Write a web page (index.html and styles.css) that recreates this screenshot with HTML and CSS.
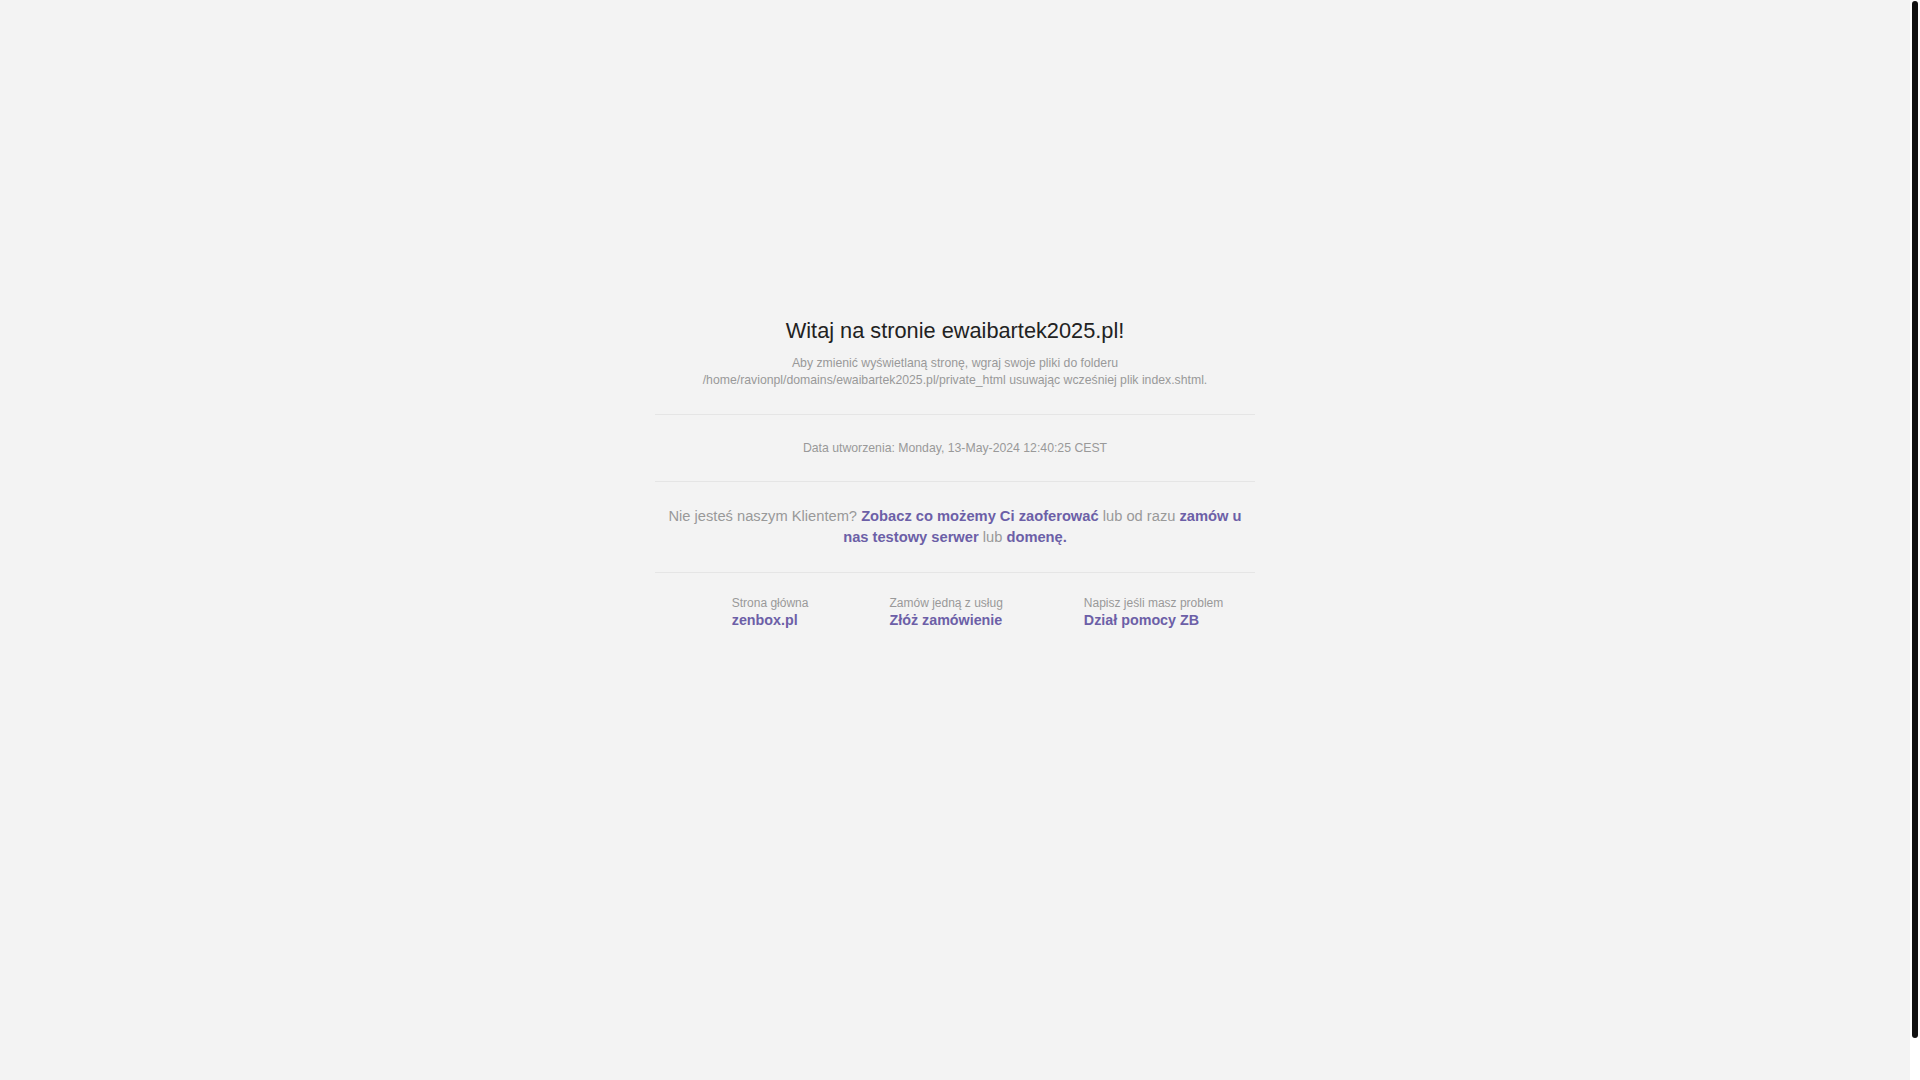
FILE: index.html
```html
<!DOCTYPE html>
<html lang="pl">
<head>
<meta charset="utf-8">
<title>ewaibartek2025.pl</title>
<link rel="stylesheet" href="styles.css">
</head>
<body>
<div class="page">
  <div class="box">
    <div class="intro">
      <h1 class="title">Witaj na stronie ewaibartek2025.pl!</h1>
      <p class="info">Aby zmienić wyświetlaną stronę, wgraj swoje pliki do folderu<br>/home/ravionpl/domains/ewaibartek2025.pl/private_html usuwając wcześniej plik index.shtml.</p>
    </div>
    <div class="date">Data utworzenia: Monday, 13-May-2024 12:40:25 CEST</div>
    <div class="offer">Nie jesteś naszym Klientem? <a href="#" class="link">Zobacz co możemy Ci zaoferować</a> lub od razu <a href="#" class="link">zamów u nas testowy serwer</a> lub <a href="#" class="link">domenę.</a></div>
    <ul class="links">
      <li class="item"><span class="label">Strona główna</span><a href="#" class="big">zenbox.pl</a></li>
      <li class="item"><span class="label">Zamów jedną z usług</span><a href="#" class="big">Złóż zamówienie</a></li>
      <li class="item"><span class="label">Napisz jeśli masz problem</span><a href="#" class="big">Dział pomocy ZB</a></li>
    </ul>
  </div>
</div>
<div class="scrollbar"><div class="thumb"></div></div>
</body>
</html>
```

FILE: styles.css
```css
html, body {
  margin: 0;
  padding: 0;
}
body {
  background: #f3f3f3;
  font-family: "Liberation Sans", Arial, Helvetica, sans-serif;
  color: #999;
  padding-right: 10px;
}
.page {
  padding-top: 318px;
}
.box {
  width: 600px;
  margin: 0 auto;
  text-align: center;
}
.intro {
  padding-bottom: 25px;
  border-bottom: 1px solid #e5e5e5;
}
.title {
  margin: 0 0 11px;
  font-size: 21.75px;
  line-height: 26px;
  font-weight: normal;
  color: #222;
}
.info {
  margin: 0;
  font-size: 12.25px;
  line-height: 17px;
  color: #999;
}
.date {
  padding: 24.5px 0;
  font-size: 12.25px;
  line-height: 17px;
  color: #999;
  border-bottom: 1px solid #e5e5e5;
}
.offer {
  padding: 24px 0;
  font-size: 14.7px;
  line-height: 21px;
  color: #999;
  border-bottom: 1px solid #e5e5e5;
}
.link {
  color: #6c5fa7;
  font-weight: bold;
  text-decoration: none;
}
.links {
  list-style: none;
  margin: 0;
  padding: 23px 0 0;
  display: flex;
  justify-content: center;
  gap: 36px;
  text-align: left;
}
.item {
  display: flex;
  flex-direction: column;
  padding-left: 45px;
}
.label {
  font-size: 12px;
  line-height: 15px;
  color: #999;
}
.big {
  font-size: 14.3px;
  line-height: 18px;
  font-weight: bold;
  color: #6c5fa7;
  text-decoration: none;
}
.scrollbar {
  position: fixed;
  top: 0;
  right: 0;
  bottom: 0;
  width: 10px;
  background: #fff;
}
.thumb {
  margin: 1px 2px 0;
  height: 1037px;
  background: #111;
  border-radius: 3px;
}
```
